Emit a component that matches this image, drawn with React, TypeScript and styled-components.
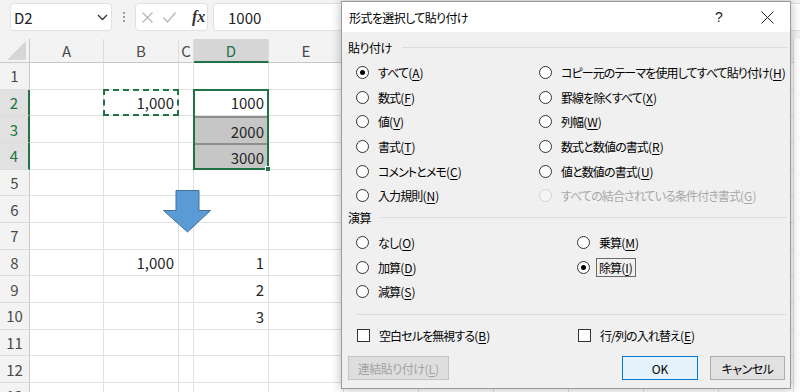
import React from 'react'
import styled, { createGlobalStyle, css } from 'styled-components'

const UI_FONT = `"Noto Sans CJK JP", "Noto Sans", sans-serif`
const EXCEL_GREEN = '#217346'

const GlobalStyle = createGlobalStyle`
  html, body {
    margin: 0;
    padding: 0;
    background: #fff;
  }
  * {
    box-sizing: border-box;
  }
`

const Screen = styled.div`
  position: relative;
  width: 800px;
  height: 392px;
  overflow: hidden;
  background: #fff;
  font-family: ${UI_FONT};
  color: #262626;
`

/* ---------- formula bar ---------- */

const FormulaBar = styled.div`
  display: flex;
  align-items: flex-start;
  height: 39px;
  padding: 3px 0 0 10px;
  background: #f3f3f3;
`

const BarBox = styled.div`
  height: 28px;
  display: flex;
  align-items: center;
  background: #fff;
  border: 1px solid #e2e2e2;
  border-radius: 4px;
`

const NameBox = styled(BarBox)`
  width: 102px;
  padding: 0 3px 0 3px;
  justify-content: space-between;
  font-size: 15px;
  color: #222;
`

const Grip = styled.div`
  width: 23px;
  height: 28px;
  display: flex;
  flex-direction: column;
  align-items: center;
  justify-content: center;
  gap: 2px;

  span {
    width: 2px;
    height: 2px;
    background: #9c9c9c;
  }
`

const FxBox = styled(BarBox)`
  width: 73px;
  padding-left: 6px;
  gap: 10px;
`

const FxLabel = styled.span`
  margin-left: 6px;
  font-family: 'Liberation Serif', serif;
  font-style: italic;
  font-weight: 700;
  font-size: 16px;
  color: #333;
`

const FormulaInput = styled(BarBox)`
  flex: 1;
  margin-left: 5px;
  padding-left: 14px;
  border-radius: 4px 0 0 4px;
  border-right: none;
  font-size: 15px;
  color: #222;
`

/* ---------- sheet ---------- */

const Sheet = styled.div`
  position: relative;
  display: grid;
  grid-template-columns: 30px 74px 75px 15px repeat(8, 75px);
  grid-template-rows: 24px repeat(13, 26.67px);
`

type GridPos = { $r: number; $c: number }

const placed = css<GridPos>`
  grid-row: ${(p) => p.$r};
  grid-column: ${(p) => p.$c};
`

const Corner = styled.div`
  position: relative;
  grid-row: 1;
  grid-column: 1;
  background: #f3f3f3;
  border-right: 1px solid #c8c8c8;
  border-bottom: 1px solid #c8c8c8;

  &::after {
    content: '';
    position: absolute;
    right: 3px;
    bottom: 2px;
    width: 19px;
    height: 19px;
    background: #d6d6d6;
    clip-path: polygon(100% 0, 100% 100%, 0 100%);
  }
`

const ColHeader = styled.div<GridPos & { $active?: boolean }>`
  ${placed}
  display: flex;
  align-items: center;
  justify-content: center;
  font-size: 15px;
  color: #4a4a4a;
  background: #f3f3f3;
  border-right: 1px solid #dcdcdc;
  border-bottom: 1px solid #c8c8c8;

  ${(p) =>
    p.$active &&
    css`
      background: #d6d6d6;
      color: ${EXCEL_GREEN};
      border-bottom: 2px solid ${EXCEL_GREEN};
    `}
`

const RowHeader = styled.div<GridPos & { $active?: boolean }>`
  ${placed}
  display: flex;
  align-items: center;
  justify-content: center;
  font-size: 15px;
  color: #4a4a4a;
  background: #f3f3f3;
  border-right: 1px solid #c8c8c8;
  border-bottom: 1px solid #dcdcdc;

  ${(p) =>
    p.$active &&
    css`
      background: #e1e1e1;
      color: ${EXCEL_GREEN};
      border-right: 2px solid ${EXCEL_GREEN};
    `}
`

const Cell = styled.div<GridPos & { $shaded?: boolean }>`
  ${placed}
  display: flex;
  align-items: center;
  justify-content: flex-end;
  padding: 1px 4px 0 0;
  font-size: 15px;
  color: #262626;
  border-right: 1px solid #e1e1e1;
  border-bottom: 1px solid #e1e1e1;
  white-space: nowrap;

  ${(p) =>
    p.$shaded &&
    css`
      background: #c6c6c6;
      border-top: 2px solid #8e8e8e;
      border-bottom: none;
    `}
`

const Selection = styled.div`
  position: relative;
  grid-column: 5;
  grid-row: 3 / 6;
  border: 2px solid ${EXCEL_GREEN};
  margin: -1px 0 0 -1px;
  pointer-events: none;
`

const FillHandle = styled.div`
  position: absolute;
  right: -4px;
  bottom: -4px;
  width: 6px;
  height: 6px;
  background: ${EXCEL_GREEN};
  border: 1px solid #fff;
`

const CopyMarquee = styled.div`
  grid-column: 3;
  grid-row: 3;
  border: 2px dashed ${EXCEL_GREEN};
  margin: -1px 0 0 -1px;
  pointer-events: none;
`

const Arrow = styled.svg`
  position: absolute;
  left: 162px;
  top: 151px;
`

/* ---------- dialog ---------- */

const Dialog = styled.div`
  position: absolute;
  left: 341px;
  top: 1px;
  width: 450px;
  height: 388px;
  display: flex;
  flex-direction: column;
  background: #f0f0f0;
  border: 1px solid #9a9a9a;
  box-shadow: 0 0 10px rgba(0, 0, 0, 0.28);
  font-size: 12px;
  font-feature-settings: 'palt';
  letter-spacing: -0.9px;
  color: #000;
`

const TitleBar = styled.div`
  height: 30px;
  display: flex;
  align-items: center;
  padding-left: 7px;
  background: #fff;
`

const Title = styled.div`
  flex: 1;
  letter-spacing: -0.6px;
`

const TitleButton = styled.div`
  width: 46px;
  height: 30px;
  display: flex;
  align-items: center;
  justify-content: center;
  font-family: 'Liberation Sans', sans-serif;
  font-size: 14px;
  letter-spacing: 0;
  color: #222;

  & + & {
    margin-left: 2px;
  }
`

const Body = styled.div`
  flex: 1;
  display: flex;
  flex-direction: column;
  padding: 7px 3px 8px 6px;
`

const GroupHeader = styled.div<{ $gap: number }>`
  display: flex;
  align-items: center;
  gap: 10px;
  height: 16px;
  margin-top: ${(p) => p.$gap}px;
  letter-spacing: -0.5px;

  &::after {
    content: '';
    flex: 1;
    height: 1px;
    background: #dcdcdc;
  }
`

const OptionGrid = styled.div<{ $col: number; $gap: number }>`
  display: grid;
  grid-template-columns: ${(p) => p.$col}px 1fr;
  grid-auto-rows: 24.7px;
  margin: ${(p) => p.$gap}px 0 0 8px;
`

const Option = styled.div<{ $disabled?: boolean }>`
  display: flex;
  align-items: center;
  gap: 9px;
  white-space: nowrap;
  color: ${(p) => (p.$disabled ? '#a8a8a8' : '#000')};
`

const RadioMark = styled.span<{ $checked?: boolean; $disabled?: boolean }>`
  position: relative;
  flex: none;
  width: 13px;
  height: 13px;
  border-radius: 50%;
  border: 1px solid ${(p) => (p.$disabled ? '#d2d2d2' : '#333')};
  background: ${(p) => (p.$disabled ? '#f5f5f5' : '#fff')};

  ${(p) =>
    p.$checked &&
    css`
      &::after {
        content: '';
        position: absolute;
        left: 3px;
        top: 3px;
        width: 5px;
        height: 5px;
        border-radius: 50%;
        background: #000;
      }
    `}
`

const CheckMark = styled.span`
  flex: none;
  width: 13px;
  height: 13px;
  border: 1px solid #333;
  background: #fff;
`

const Label = styled.span<{ $focused?: boolean }>`
  ${(p) =>
    p.$focused &&
    css`
      margin-left: -3px;
      padding: 0 2px;
      border: 1px solid #6a6a6a;
    `}
`

const Shortcut = styled.span`
  letter-spacing: 0;

  u {
    text-underline-offset: 2px;
  }
`

const Rule = styled.div`
  height: 1px;
  margin: 10px 1px 0 8px;
  background: #dcdcdc;
`

const CheckRow = styled.div`
  display: grid;
  grid-template-columns: 221px 1fr;
  height: 24px;
  margin: 8px 0 0 9px;
`

const ButtonRow = styled.div`
  display: flex;
  margin-top: 9px;
  padding-right: 2px;
`

const Button = styled.div<{ $variant?: 'default' | 'primary' | 'disabled'; $w: number }>`
  width: ${(p) => p.$w}px;
  height: 24px;
  display: flex;
  align-items: center;
  justify-content: center;
  border: 1px solid #adadad;
  background: #e1e1e1;
  color: #000;
  letter-spacing: -0.5px;

  ${(p) =>
    p.$variant === 'primary' &&
    css`
      margin-left: auto;
      border-color: #0078d7;
      background: #e5f1fb;
      letter-spacing: 0;
    `}

  ${(p) =>
    p.$variant === 'disabled' &&
    css`
      border-color: #c4c4c4;
      background: #dedede;
      color: #a3a3a3;
    `}

  & + & {
    margin-left: 12px;
  }
  &:first-child + & {
    margin-left: auto;
  }
`

/* ---------- data ---------- */

type Col = 'A' | 'B' | 'C' | 'D' | 'E' | 'F' | 'G' | 'H' | 'I' | 'J' | 'K'
const COLS: Col[] = ['A', 'B', 'C', 'D', 'E', 'F', 'G', 'H', 'I', 'J', 'K']

const DATA: Record<number, Partial<Record<Col, string>>> = {
  2: { B: '1,000', D: '1000' },
  3: { D: '2000' },
  4: { D: '3000' },
  8: { B: '1,000', D: '1' },
  9: { D: '2' },
  10: { D: '3' },
}

const ROWS = Array.from({ length: 13 }, (_, i) => i + 1)

type Choice = { label: string; accessKey: string; checked?: boolean; disabled?: boolean; focused?: boolean }

const PASTE_OPTIONS: Choice[] = [
  { label: 'すべて', accessKey: 'A', checked: true },
  { label: 'コピー元のテーマを使用してすべて貼り付け', accessKey: 'H' },
  { label: '数式', accessKey: 'F' },
  { label: '罫線を除くすべて', accessKey: 'X' },
  { label: '値', accessKey: 'V' },
  { label: '列幅', accessKey: 'W' },
  { label: '書式', accessKey: 'T' },
  { label: '数式と数値の書式', accessKey: 'R' },
  { label: 'コメントとメモ', accessKey: 'C' },
  { label: '値と数値の書式', accessKey: 'U' },
  { label: '入力規則', accessKey: 'N' },
  { label: 'すべての結合されている条件付き書式', accessKey: 'G', disabled: true },
]

const OPERATION_OPTIONS: Choice[] = [
  { label: 'なし', accessKey: 'O' },
  { label: '乗算', accessKey: 'M' },
  { label: '加算', accessKey: 'D' },
  { label: '除算', accessKey: 'I', checked: true, focused: true },
  { label: '減算', accessKey: 'S' },
]

const AccessKey = ({ k }: { k: string }) => (
  <Shortcut>
    (<u>{k}</u>)
  </Shortcut>
)

const RadioOption = ({ label, accessKey, checked, disabled, focused }: Choice) => (
  <Option $disabled={disabled}>
    <RadioMark $checked={checked} $disabled={disabled} />
    <Label $focused={focused}>
      {label}
      <AccessKey k={accessKey} />
    </Label>
  </Option>
)

const CheckOption = ({ label, accessKey }: { label: string; accessKey: string }) => (
  <Option>
    <CheckMark />
    <span>
      {label}
      <AccessKey k={accessKey} />
    </span>
  </Option>
)

export default function App() {
  return (
    <>
      <GlobalStyle />
      <Screen>
        <FormulaBar>
          <NameBox>
            <span>D2</span>
            <svg width="11" height="7" viewBox="0 0 11 7">
              <polyline points="1,1 5.5,5.5 10,1" fill="none" stroke="#333" strokeWidth="1.3" />
            </svg>
          </NameBox>
          <Grip>
            <span />
            <span />
            <span />
          </Grip>
          <FxBox>
            <svg width="11" height="11" viewBox="0 0 11 11">
              <path d="M0.5 0.5 L10.5 10.5 M10.5 0.5 L0.5 10.5" stroke="#b4b4b4" strokeWidth="1.2" />
            </svg>
            <svg width="13" height="11" viewBox="0 0 13 11">
              <polyline points="0.5,5.5 4.5,10 12.5,0.5" fill="none" stroke="#b4b4b4" strokeWidth="1.2" />
            </svg>
            <FxLabel>fx</FxLabel>
          </FxBox>
          <FormulaInput>1000</FormulaInput>
        </FormulaBar>

        <Sheet>
          <Corner />
          {COLS.map((c, ci) => (
            <ColHeader key={c} $r={1} $c={ci + 2} $active={c === 'D'}>
              {c}
            </ColHeader>
          ))}
          {ROWS.map((r) => (
            <React.Fragment key={r}>
              <RowHeader $r={r + 1} $c={1} $active={r >= 2 && r <= 4}>
                {r}
              </RowHeader>
              {COLS.map((c, ci) => (
                <Cell key={c} $r={r + 1} $c={ci + 2} $shaded={c === 'D' && (r === 3 || r === 4)}>
                  {DATA[r]?.[c] ?? ''}
                </Cell>
              ))}
            </React.Fragment>
          ))}
          <CopyMarquee />
          <Selection>
            <FillHandle />
          </Selection>
          <Arrow width="50" height="43" viewBox="0 0 50 43">
            <polygon
              points="14,0.5 37,0.5 37,20.5 48.5,20.5 25.5,42 1.5,20.5 14,20.5"
              fill="#5b9bd5"
              stroke="#41719c"
              strokeWidth="1"
            />
          </Arrow>
        </Sheet>

        <Dialog>
          <TitleBar>
            <Title>形式を選択して貼り付け</Title>
            <TitleButton>?</TitleButton>
            <TitleButton>
              <svg width="13" height="13" viewBox="0 0 13 13">
                <path d="M0.5 0.5 L12.5 12.5 M12.5 0.5 L0.5 12.5" stroke="#222" strokeWidth="1" />
              </svg>
            </TitleButton>
          </TitleBar>
          <Body>
            <GroupHeader $gap={0}>貼り付け</GroupHeader>
            <OptionGrid $col={183} $gap={5}>
              {PASTE_OPTIONS.map((o) => (
                <RadioOption {...o} key={o.label} />
              ))}
            </OptionGrid>
            <GroupHeader $gap={1}>演算</GroupHeader>
            <OptionGrid $col={221} $gap={5}>
              {OPERATION_OPTIONS.map((o) => (
                <RadioOption {...o} key={o.label} />
              ))}
            </OptionGrid>
            <Rule />
            <CheckRow>
              <CheckOption label="空白セルを無視する" accessKey="B" />
              <CheckOption label="行/列の入れ替え" accessKey="E" />
            </CheckRow>
            <ButtonRow>
              <Button $variant="disabled" $w={101}>
                連結貼り付け
                <AccessKey k="L" />
              </Button>
              <Button $variant="primary" $w={76}>
                OK
              </Button>
              <Button $w={75}>キャンセル</Button>
            </ButtonRow>
          </Body>
        </Dialog>
      </Screen>
    </>
  )
}
